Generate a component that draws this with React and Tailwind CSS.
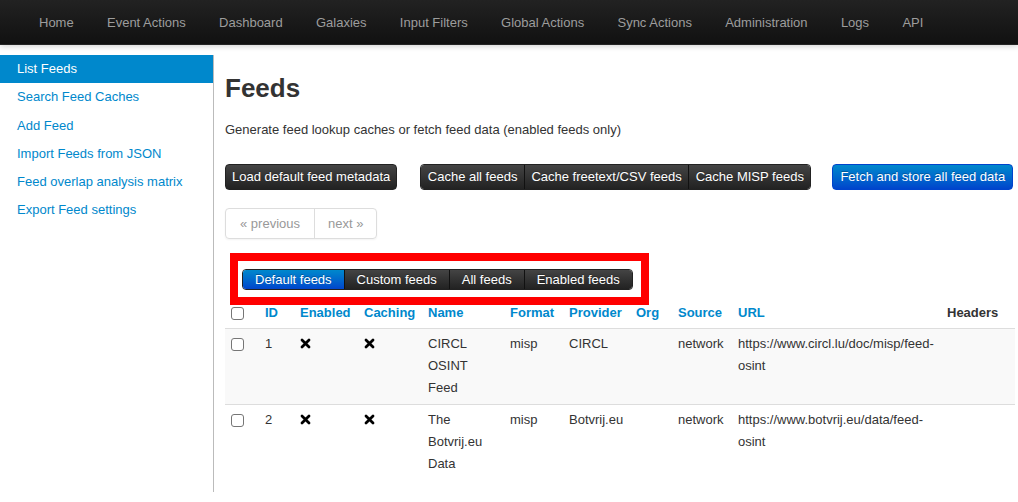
import React from "react";

const NAV = ["Home", "Event Actions", "Dashboard", "Galaxies", "Input Filters", "Global Actions", "Sync Actions", "Administration", "Logs", "API"];

const SIDE = ["List Feeds", "Search Feed Caches", "Add Feed", "Import Feeds from JSON", "Feed overlap analysis matrix", "Export Feed settings"];

const FEEDS = [
  { id: 1, name: "CIRCL OSINT Feed", format: "misp", provider: "CIRCL", source: "network", url: "https://www.circl.lu/doc/misp/feed-osint" },
  { id: 2, name: "The Botvrij.eu Data", format: "misp", provider: "Botvrij.eu", source: "network", url: "https://www.botvrij.eu/data/feed-osint" },
];

const Cross = () => (
  <svg width="11" height="11" viewBox="0 0 11 11" className="inline-block align-[-1px]">
    <path d="M2 2 L9 9 M9 2 L2 9" stroke="#000" strokeWidth="2.8" strokeLinecap="round" />
  </svg>
);

const Check = () => (
  <span className="inline-block w-[13px] h-[13px] rounded-[3px] border border-[#767676] bg-white align-middle" />
);

const darkBtn = "bg-linear-to-b from-[#444] to-[#222] text-white [text-shadow:0_-1px_0_rgba(0,0,0,0.25)]";
const blueBtn = "bg-linear-to-b from-[#0088cc] to-[#0044cc] text-white [text-shadow:0_-1px_0_rgba(0,0,0,0.25)]";

export default function App() {
  return (
    <div className="min-h-screen bg-white text-[13px] text-[#333] overflow-hidden" style={{ fontFamily: '"Liberation Sans", Arial, sans-serif' }}>
      {/* Top navbar */}
      <div className="h-[45px] pt-[1px] bg-linear-to-b from-[#222] to-[#111] border-b border-[#252525] shadow-[0_1px_6px_rgba(0,0,0,0.2)] flex items-center pl-[39px] gap-[33.3px]">
        {NAV.map((n) => (
          <span key={n} className="text-[13px] text-[#9d9d9d] leading-[20px]">{n}</span>
        ))}
      </div>

      <div className="flex pt-[10px] min-h-[447px]">
        {/* Sidebar */}
        <div className="w-[214px] shrink-0 border-r border-[#bbb]">
          {SIDE.map((s, i) => (
            <div
              key={s}
              className={`h-[28.3px] leading-[28px] pl-[17px] ${i === 0 ? "bg-[#0088cc] text-white" : "text-[#0088cc]"}`}
            >
              {s}
            </div>
          ))}
        </div>

        {/* Main */}
        <div className="pl-[11px] flex-1">
          <h2 className="mt-[13px] text-[26px] font-bold leading-[40px] text-[#333]">Feeds</h2>
          <p className="mt-[12px] leading-[20px]">Generate feed lookup caches or fetch feed data (enabled feeds only)</p>

          <div className="mt-[24px] flex items-center">
            <span className={`h-[26px] leading-[24px] px-[6px] rounded-[4px] border border-[#222] ${darkBtn}`}>Load default feed metadata</span>
            <div className="ml-[23px] flex rounded-[4px] border border-[#222] overflow-hidden">
              <span className={`h-[24px] leading-[24px] px-[6.5px] ${darkBtn}`}>Cache all feeds</span>
              <span className={`h-[24px] leading-[24px] px-[6.5px] border-l border-[#111] ${darkBtn}`}>Cache freetext/CSV feeds</span>
              <span className={`h-[24px] leading-[24px] px-[6.5px] border-l border-[#111] ${darkBtn}`}>Cache MISP feeds</span>
            </div>
            <span className={`ml-[21px] h-[26px] leading-[24px] px-[7px] rounded-[4px] border border-[#0044cc] ${blueBtn}`}>Fetch and store all feed data</span>
          </div>

          <div className="mt-[18px] inline-flex rounded-[4px] border border-[#ddd] shadow-[0_1px_2px_rgba(0,0,0,0.05)] text-[#999]">
            <span className="h-[29px] leading-[29px] px-[14px]">« previous</span>
            <span className="h-[29px] leading-[29px] px-[13px] border-l border-[#ddd]">next »</span>
          </div>

          <div className="mt-[30px] ml-[17px]">
            <div className="relative inline-flex">
              <div className="inline-flex rounded-[4px] overflow-hidden border border-[#222]">
                <span className={`h-[19px] leading-[19px] px-[12px] ${blueBtn}`}>Default feeds</span>
                <span className={`h-[19px] leading-[19px] px-[12px] border-l border-[#111] ${darkBtn}`}>Custom feeds</span>
                <span className={`h-[19px] leading-[19px] px-[12px] border-l border-[#111] ${darkBtn}`}>All feeds</span>
                <span className={`h-[19px] leading-[19px] px-[12px] border-l border-[#111] ${darkBtn}`}>Enabled feeds</span>
              </div>
              {/* highlight annotation */}
              <div className="absolute left-[-12px] top-[-16px] right-[-16px] bottom-[-15px] border-[8px] border-[#ff0000] pointer-events-none" />
            </div>
          </div>

          <table className="mt-[8px] table-fixed border-collapse w-[790px] leading-[22px]">
            <colgroup>
              <col className="w-[35px]" />
              <col className="w-[35px]" />
              <col className="w-[64px]" />
              <col className="w-[64px]" />
              <col className="w-[82px]" />
              <col className="w-[59px]" />
              <col className="w-[67px]" />
              <col className="w-[42px]" />
              <col className="w-[60px]" />
              <col className="w-[209px]" />
              <col className="w-[73px]" />
            </colgroup>
            <thead>
              <tr className="text-left font-bold text-[#0088cc] border-b border-[#ddd]">
                <th className="px-[6px] py-[4px]"><Check /></th>
                {["ID", "Enabled", "Caching", "Name", "Format", "Provider", "Org", "Source", "URL"].map((h) => (
                  <th key={h} className="px-[5px] py-[4px] font-bold">{h}</th>
                ))}
                <th className="px-[5px] py-[4px] font-bold text-[#333]">Headers</th>
              </tr>
            </thead>
            <tbody>
              {FEEDS.map((f, i) => (
                <tr key={f.id} className={`align-top border-t border-[#ddd] ${i % 2 === 0 ? "bg-[#f9f9f9]" : "bg-white"}`}>
                  <td className="px-[6px] pt-[4px] pb-[5px]"><Check /></td>
                  <td className="px-[5px] pt-[4px] pb-[5px]">{f.id}</td>
                  <td className="px-[5px] pt-[4px] pb-[5px]"><Cross /></td>
                  <td className="px-[5px] pt-[4px] pb-[5px]"><Cross /></td>
                  <td className="px-[5px] pt-[4px] pb-[5px]">{f.name}</td>
                  <td className="px-[5px] pt-[4px] pb-[5px]">{f.format}</td>
                  <td className="px-[5px] pt-[4px] pb-[5px]">{f.provider}</td>
                  <td className="px-[5px] pt-[4px] pb-[5px]"></td>
                  <td className="px-[5px] pt-[4px] pb-[5px]">{f.source}</td>
                  <td className="px-[5px] pt-[4px] pb-[5px] break-words">{f.url}</td>
                  <td className="px-[5px] pt-[4px] pb-[5px]"></td>
                </tr>
              ))}
            </tbody>
          </table>
        </div>
      </div>
    </div>
  );
}
